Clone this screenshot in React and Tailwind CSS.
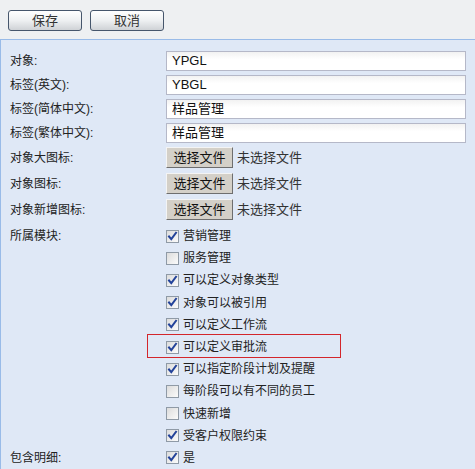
import { Fragment } from "react";

const font = { fontFamily: '"Liberation Sans", "Noto Sans CJK SC", sans-serif' };

const textFields = [
  { label: "对象:", value: "YPGL" },
  { label: "标签(英文):", value: "YBGL" },
  { label: "标签(简体中文):", value: "样品管理" },
  { label: "标签(繁体中文):", value: "样品管理" },
];

const fileFields = ["对象大图标:", "对象图标:", "对象新增图标:"];

const modules = [
  { label: "营销管理", checked: true },
  { label: "服务管理", checked: false },
  { label: "可以定义对象类型", checked: true },
  { label: "对象可以被引用", checked: true },
  { label: "可以定义工作流", checked: true },
  { label: "可以定义审批流", checked: true, marked: true },
  { label: "可以指定阶段计划及提醒", checked: true },
  { label: "每阶段可以有不同的员工", checked: false },
  { label: "快速新增", checked: false },
  { label: "受客户权限约束", checked: true },
];

const Checkbox = ({ checked }) => (
  <span className="relative flex h-[13px] w-[13px] shrink-0 items-center justify-center border border-[#8f9aa6] bg-gradient-to-br from-[#dcdcdc] to-[#fbfbfb]">
    {checked && (
      <svg width="11" height="11" viewBox="0 0 11 11">
        <path
          d="M2 5.5 L4.3 8.2 L9 1.8"
          fill="none"
          stroke="#23439a"
          strokeWidth="2"
          strokeLinecap="square"
        />
      </svg>
    )}
  </span>
);

const ToolButton = ({ children }) => (
  <button
    type="button"
    className="flex h-[21px] w-[74px] items-center justify-center rounded-[3px] border border-[#46566c] bg-gradient-to-b from-white via-[#eef0f2] to-[#cfd2d6] text-[13px] text-[#333]"
  >
    {children}
  </button>
);

const Label = ({ children }) => (
  <div className="w-[165px] shrink-0 pl-[9px] text-[12px] text-[#222]">{children}</div>
);

export default function App() {
  return (
    <div className="h-[469px] w-[475px] overflow-hidden bg-[#eef0f2]" style={font}>
      <div className="flex h-[39px] gap-2 px-2 pt-[10px]">
        <ToolButton>保存</ToolButton>
        <ToolButton>取消</ToolButton>
      </div>

      <div className="h-[430px] border-l border-t border-[#99bbe8] bg-[#dfe8f6] pt-[11px] leading-[16px]">
        {textFields.map((f) => (
          <div key={f.label} className="mb-[4px] flex h-[20px] items-center">
            <Label>{f.label}</Label>
            <div className="flex h-[20px] w-[300px] items-center border border-[#b5b8c8] bg-gradient-to-b from-[#f2f2f2] to-white to-[40%] px-[5px] text-[13px] text-[#111]">
              {f.value}
            </div>
          </div>
        ))}

        {fileFields.map((label) => (
          <div key={label} className="mb-[5px] flex h-[21px] items-center">
            <Label>{label}</Label>
            <span className="flex h-[21px] w-[67px] items-center justify-center border border-b-[#6e6e6e] border-l-[#f4f4f4] border-r-[#6e6e6e] border-t-[#f4f4f4] bg-[#d4d0c8] text-[13px] text-[#111]">
              选择文件
            </span>
            <span className="ml-[4px] text-[13px] text-[#333]">未选择文件</span>
          </div>
        ))}

        <div className="flex">
          <div className="flex h-[22px] items-center">
            <Label>所属模块:</Label>
          </div>
          <div className="flex flex-col">
            {modules.map((m) => (
              <div key={m.label} className="relative flex h-[22.2px] items-center gap-[4px] text-[12px] text-[#222]">
                <Checkbox checked={m.checked} />
                <span>{m.label}</span>
                {m.marked && (
                  <Fragment>
                    <span className="absolute left-[-19px] top-[-2px] h-[24px] w-[194px] border border-[#d3262b]" />
                  </Fragment>
                )}
              </div>
            ))}
          </div>
        </div>

        <div className="flex h-[22px] items-center">
          <Label>包含明细:</Label>
          <div className="flex items-center gap-[4px] text-[12px] text-[#222]">
            <Checkbox checked />
            <span>是</span>
          </div>
        </div>
      </div>
    </div>
  );
}
